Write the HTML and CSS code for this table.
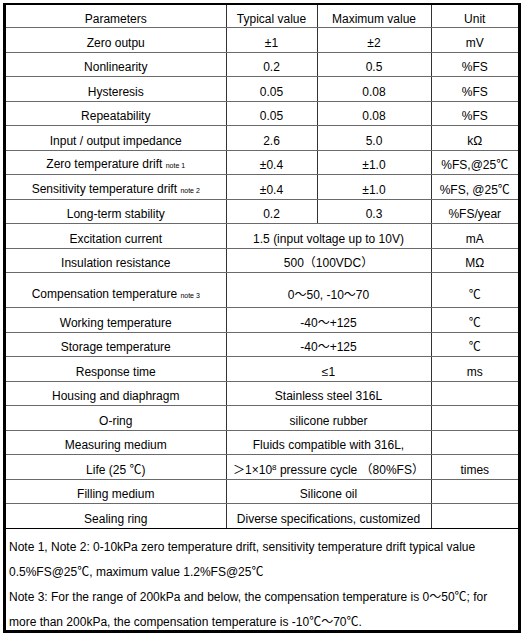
FILE: index.html
```html
<!DOCTYPE html>
<html lang="en">
<head>
    <meta charset="UTF-8">
    <title>Specifications</title>
    <link rel="stylesheet" href="styles.css">
</head>
<body>
    <div class="spec">
        <table class="spec-table">
            <colgroup>
                <col class="c-param">
                <col class="c-typ">
                <col class="c-max">
                <col class="c-unit">
            </colgroup>
            <tr class="head"><td>Parameters</td><td>Typical value</td><td>Maximum value</td><td>Unit</td></tr>
            <tr><td>Zero outpu</td><td>±1</td><td>±2</td><td>mV</td></tr>
            <tr><td>Nonlinearity</td><td>0.2</td><td>0.5</td><td>%FS</td></tr>
            <tr><td>Hysteresis</td><td>0.05</td><td>0.08</td><td>%FS</td></tr>
            <tr><td>Repeatability</td><td>0.05</td><td>0.08</td><td>%FS</td></tr>
            <tr><td>Input / output impedance</td><td>2.6</td><td>5.0</td><td>kΩ</td></tr>
            <tr><td>Zero temperature drift <span class="note">note 1</span></td><td>±0.4</td><td>±1.0</td><td>%FS,@25℃</td></tr>
            <tr><td>Sensitivity temperature drift <span class="note">note 2</span></td><td>±0.4</td><td>±1.0</td><td>%FS, @25℃</td></tr>
            <tr><td>Long-term stability</td><td>0.2</td><td>0.3</td><td>%FS/year</td></tr>
            <tr><td>Excitation current</td><td colspan="2">1.5 (input voltage up to 10V)</td><td>mA</td></tr>
            <tr><td>Insulation resistance</td><td colspan="2">500（100VDC）</td><td>MΩ</td></tr>
            <tr class="tall"><td>Compensation temperature <span class="note">note 3</span></td><td colspan="2">0～50, -10～70</td><td>℃</td></tr>
            <tr><td>Working temperature</td><td colspan="2">-40～+125</td><td>℃</td></tr>
            <tr><td>Storage temperature</td><td colspan="2">-40～+125</td><td>℃</td></tr>
            <tr><td>Response time</td><td colspan="2">≤1</td><td>ms</td></tr>
            <tr><td>Housing and diaphragm</td><td colspan="2">Stainless steel 316L</td><td></td></tr>
            <tr><td>O-ring</td><td colspan="2">silicone rubber</td><td></td></tr>
            <tr><td>Measuring medium</td><td colspan="2">Fluids compatible with 316L,</td><td></td></tr>
            <tr><td>Life (25 ℃)</td><td colspan="2">＞1×10<sup>8</sup> pressure cycle （80%FS）</td><td>times</td></tr>
            <tr><td>Filling medium</td><td colspan="2">Silicone oil</td><td></td></tr>
            <tr><td>Sealing ring</td><td colspan="2">Diverse specifications, customized</td><td></td></tr>
        </table>
        <div class="notes">
            <p>Note 1, Note 2: 0-10kPa zero temperature drift, sensitivity temperature drift typical value</p>
            <p>0.5%FS@25℃, maximum value 1.2%FS@25℃</p>
            <p>Note 3: For the range of 200kPa and below, the compensation temperature is 0～50℃; for</p>
            <p>more than 200kPa, the compensation temperature is -10℃～70℃.</p>
        </div>
    </div>
</body>
</html>
```

FILE: styles.css
```css
body {
    margin: 0;
    padding: 3px 0 0 3px;
    background-color: #fff;
    color: #000;
    font-family: "Liberation Sans", Arial, "Noto Sans CJK SC", sans-serif;
    font-size: 12px;
}
.spec {
    width: 512px;
    border: 3px solid #000;
    border-top-width: 2px;
}
.spec-table {
    width: 512px;
    border-collapse: collapse;
    border-style: hidden;
    table-layout: fixed;
}
.c-param {
    width: 220px;
}
.c-typ {
    width: 91px;
}
.c-max {
    width: 114px;
}
.c-unit {
    width: 87px;
}
.spec-table td {
    height: 17.5px;
    padding: 6px 0 0;
    text-align: center;
    vertical-align: middle;
    border-top: 1px solid #6a6a6a;
    border-bottom: 1px solid #6a6a6a;
    border-left: 1px solid #333;
    border-right: 1px solid #333;
    line-height: 14px;
    white-space: nowrap;
}
.spec-table .head td {
    height: 17px;
    padding-top: 5px;
}
.spec-table .tall td {
    height: 25px;
    padding-top: 9px;
}
.note {
    font-size: 7px;
}
sup {
    font-size: 8px;
    line-height: 0;
    vertical-align: 4px;
}
.notes {
    border-top: 1px solid #000;
    padding: 10px 0 0 3px;
}
.notes p {
    margin: 0 0 9px;
    line-height: 16px;
    white-space: nowrap;
}
.notes p:last-child {
    margin-bottom: 0;
}
```
